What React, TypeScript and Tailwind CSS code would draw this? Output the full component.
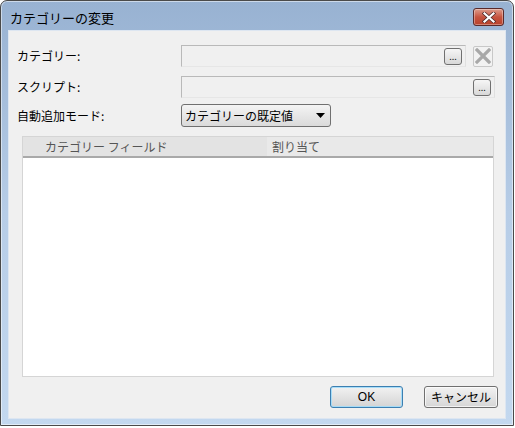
import React from "react";

const jp = { fontFamily: '"Noto Sans CJK JP", "Noto Sans", sans-serif' };

function EllipsisButton() {
  return (
    <div className="flex h-[17px] w-[18px] shrink-0 items-end justify-center rounded-[3px] border border-[#707070] bg-gradient-to-b from-[#f6f6f6] to-[#d8d8d8] pb-[3px] text-[9px] leading-none text-[#222]">
      ...
    </div>
  );
}

function DisabledClear() {
  return (
    <div className="flex h-[21px] w-[20px] shrink-0 items-center justify-center rounded-[2px] border border-[#c8c8c8] bg-[#f2f2f2]">
      <svg width="16" height="16" viewBox="0 0 16 16">
        <path d="M2 2 L14 14 M14 2 L2 14" stroke="#a8a8a8" strokeWidth="3.2" strokeLinecap="square" />
      </svg>
    </div>
  );
}

function TextBox({ width, children }: { width: number; children?: React.ReactNode }) {
  return (
    <div
      className="flex h-[22px] shrink-0 items-center justify-end border border-[#b9b9b9] border-b-[#e6e6e6] border-r-[#e0e0e0] bg-[#f0f0f0] pr-[3px]"
      style={{ width }}
    >
      {children}
    </div>
  );
}

export default function App() {
  return (
    <div className="h-[428px] w-[515px] bg-white" style={jp}>
      <div className="flex h-[426px] w-[514px] flex-col rounded-t-[7px] border border-[#4a4a4a] bg-gradient-to-b from-[#98b2d2] via-[#b7cde7] to-[#c3d8ef] shadow-[inset_0_0_0_1px_rgba(255,255,255,0.5)]">
        {/* title bar */}
        <div className="flex h-[29px] shrink-0 items-center justify-between pl-[9px] pr-[9px]">
          <span className="pt-[3px] text-[13px] leading-none text-black">カテゴリーの変更</span>
          <div className="mt-[3px] flex h-[18px] w-[31px] items-center justify-center rounded-[3px] border border-[#5a2a2a] bg-gradient-to-b from-[#dc9c8c] via-[#c65440] to-[#b8412a] shadow-[inset_0_0_0_1px_rgba(255,255,255,0.35)]">
            <svg width="14" height="11" viewBox="0 0 14 11">
              <path d="M2.5 1.5 L11.5 9.5 M11.5 1.5 L2.5 9.5" stroke="#4a2a2a" strokeWidth="3.6" strokeLinecap="square" />
              <path d="M2.5 1.5 L11.5 9.5 M11.5 1.5 L2.5 9.5" stroke="#ffffff" strokeWidth="2.2" strokeLinecap="square" />
            </svg>
          </div>
        </div>

        {/* client area */}
        <div className="mx-[7px] flex h-[389px] flex-col border border-[#dde6f1] bg-[#f0f0f0] text-[12px] leading-none text-black">
          <div className="mt-[14px] flex items-center pl-[8px]">
            <span className="w-[164px]">カテゴリー:</span>
            <TextBox width={285}>
              <EllipsisButton />
            </TextBox>
            <div className="ml-[7px]">
              <DisabledClear />
            </div>
          </div>

          <div className="mt-[9px] flex items-center pl-[8px]">
            <span className="w-[164px]">スクリプト:</span>
            <TextBox width={314}>
              <EllipsisButton />
            </TextBox>
          </div>

          <div className="mt-[6px] flex items-center pl-[8px]">
            <span className="w-[164px]">自動追加モード:</span>
            <div className="flex h-[23px] w-[150px] items-center justify-between rounded-[3px] border border-[#707070] bg-gradient-to-b from-[#f4f4f4] to-[#dadada] pl-[3px] pr-[5px]">
              <span>カテゴリーの既定値</span>
              <svg width="9" height="5" viewBox="0 0 9 5">
                <path d="M0 0 H9 L4.5 5 Z" fill="#000" />
              </svg>
            </div>
          </div>

          {/* list */}
          <div className="ml-[13px] mr-[11px] mt-[9px] flex h-[241px] flex-col border border-[#d5d5d5] bg-white">
            <div className="flex h-[21px] shrink-0 border-b-2 border-[#a9a9a9] text-[#555]">
              <div className="flex w-[244px] items-center bg-[#e3e3e3] pl-[22px]">カテゴリー フィールド</div>
              <div className="flex flex-1 items-center bg-[#e9e9e9] pl-[5px]">割り当て</div>
            </div>
          </div>

          {/* buttons */}
          <div className="mt-[9px] flex justify-end gap-[21px] pr-[7px]">
            <div className="flex h-[22px] w-[73px] items-center justify-center rounded-[3px] border border-[#3c7fb1] bg-gradient-to-b from-[#f2f2f2] to-[#d4d4d4] shadow-[inset_0_0_0_1px_rgba(160,220,250,0.9)]" style={{ fontFamily: '"Liberation Sans", sans-serif' }}>
              OK
            </div>
            <div className="flex h-[22px] w-[74px] items-center justify-center rounded-[3px] border border-[#707070] bg-gradient-to-b from-[#f2f2f2] to-[#d6d6d6] shadow-[inset_0_0_0_1px_rgba(255,255,255,0.7)]">
              キャンセル
            </div>
          </div>
        </div>
        <div className="flex-1" />
      </div>
    </div>
  );
}
